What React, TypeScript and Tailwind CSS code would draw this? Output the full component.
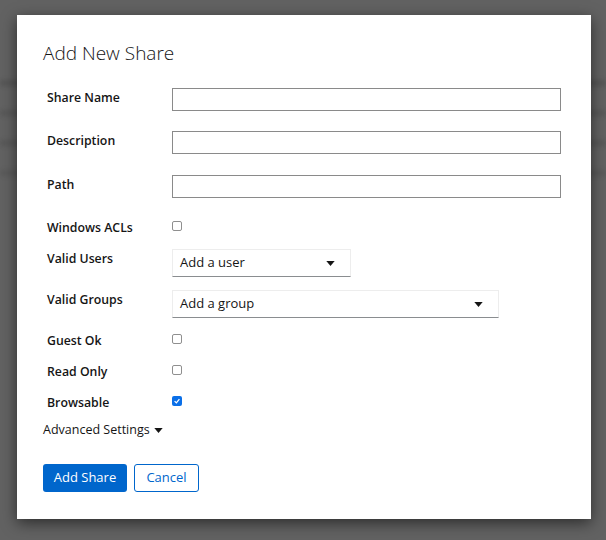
import React from "react";

const Checkbox = ({ checked = false }: { checked?: boolean }) =>
  checked ? (
    <span className="mt-[3px] flex h-[10px] w-[10px] items-center justify-center rounded-[2px] bg-[#0a6fe8]">
      <svg viewBox="0 0 10 10" className="h-[8px] w-[8px]">
        <path d="M2 5.2 L4.2 7.3 L8 2.6" fill="none" stroke="white" strokeWidth="1.6" />
      </svg>
    </span>
  ) : (
    <span className="mt-[3px] block h-[10px] w-[10px] rounded-[2px] border border-[#8f8f8f] bg-white" />
  );

const Caret = () => (
  <svg viewBox="0 0 10 6" className="h-[5px] w-[9px]">
    <path d="M0 0 L10 0 L5 6 Z" fill="#151515" />
  </svg>
);

const Label = ({ children }: { children: React.ReactNode }) => (
  <div className="w-[129px] shrink-0 pl-[4px] pt-[2px] text-[12.3px] leading-[16px] font-semibold text-[#151515]">
    {children}
  </div>
);

const TextRow = ({ label, className }: { label: string; className?: string }) => (
  <div className={"flex items-start " + (className ?? "")}>
    <Label>{label}</Label>
    <input className="h-[23px] w-[389px] border border-[#8a8a8a] bg-white outline-none" />
  </div>
);

const CheckRow = ({ label, checked, className }: { label: string; checked?: boolean; className?: string }) => (
  <div className={"flex items-start " + (className ?? "")}>
    <Label>{label}</Label>
    <Checkbox checked={checked} />
  </div>
);

const SelectRow = ({ label, placeholder, width, className }: { label: string; placeholder: string; width: string; className?: string }) => (
  <div className={"flex items-start " + (className ?? "")}>
    <Label>{label}</Label>
    <div className={"flex h-[28px] items-center justify-between border border-[#ededed] border-b-[#8a8d90] pl-[7px] pr-[15px] text-[13px] text-[#151515] " + width}>
      <span>{placeholder}</span>
      <Caret />
    </div>
  </div>
);

export default function App() {
  return (
    <div
      className="relative h-[540px] w-[606px] overflow-hidden bg-[#626262]"
      style={{ fontFamily: '"Open Sans", "Liberation Sans", sans-serif' }}
    >
      {/* page behind the backdrop */}
      <div className="flex flex-col pt-[80px]">
        <div className="h-[6px] bg-[#565656] blur-[2px]" />
        <div className="mt-[24px] h-[6px] bg-[#585858] blur-[2px]" />
        <div className="mt-[24px] h-[6px] bg-[#585858] blur-[2px]" />
        <div className="mt-[24px] h-[6px] bg-[#5a5a5a] blur-[2px]" />
      </div>

      {/* modal */}
      <div className="absolute left-[17px] top-[15px] h-[504px] w-[574px] bg-white px-[26px] pt-[24px] shadow-[0_4px_14px_rgba(0,0,0,0.55)]">
        <h1 className="text-[19px] leading-[28px] font-light text-[#151515]">Add New Share</h1>

        <div className="mt-[21px] flex flex-col">
          <TextRow label="Share Name" />
          <TextRow label="Description" className="mt-[20px]" />
          <TextRow label="Path" className="mt-[21px]" />
          <CheckRow label="Windows ACLs" className="mt-[20px]" />
          <SelectRow label="Valid Users" placeholder="Add a user" width="w-[179px]" className="mt-[13px]" />
          <SelectRow label="Valid Groups" placeholder="Add a group" width="w-[327px]" className="mt-[13px]" />
          <CheckRow label="Guest Ok" className="mt-[13px]" />
          <CheckRow label="Read Only" className="mt-[13px]" />
          <CheckRow label="Browsable" checked className="mt-[13px]" />
        </div>

        <div className="mt-[10px] flex items-center gap-[4px] text-[12.5px] leading-[18px] text-[#151515]">
          Advanced Settings
          <Caret />
        </div>

        <div className="mt-[25px] flex gap-[7px]">
          <button className="h-[28px] w-[84px] rounded-[3px] bg-[#0066cc] text-[13px] text-white">Add Share</button>
          <button className="h-[28px] w-[65px] rounded-[3px] border border-[#0066cc] bg-white text-[13px] text-[#0066cc]">
            Cancel
          </button>
        </div>
      </div>
    </div>
  );
}
